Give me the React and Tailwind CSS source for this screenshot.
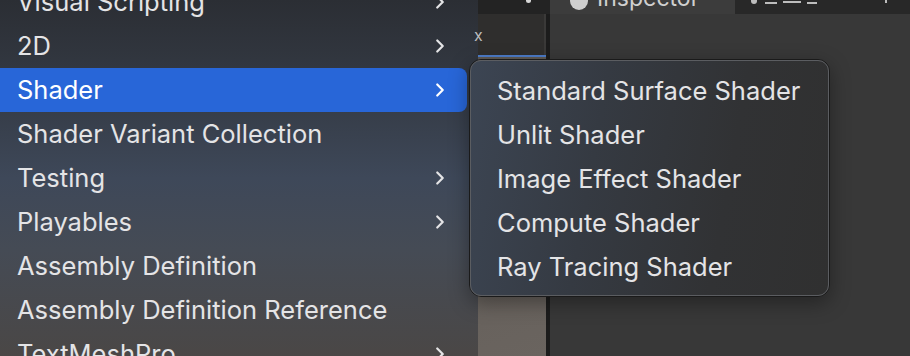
import { ChevronRight } from "lucide-react";

const mainItems = [
  { label: "Visual Scripting", sub: true },
  { label: "2D", sub: true },
  { label: "Shader", sub: true, active: true },
  { label: "Shader Variant Collection" },
  { label: "Testing", sub: true },
  { label: "Playables", sub: true },
  { label: "Assembly Definition" },
  { label: "Assembly Definition Reference" },
  { label: "TextMeshPro", sub: true },
];

const shaderItems = [
  "Standard Surface Shader",
  "Unlit Shader",
  "Image Effect Shader",
  "Compute Shader",
  "Ray Tracing Shader",
];

function MenuRow({ item }) {
  return (
    <div
      className={
        item.active
          ? "h-[44px] flex items-center pl-[17px] pr-[20px] bg-[#2866d8] rounded-r-[8px] text-white"
          : "h-[44px] flex items-center pl-[17px] pr-[20px] text-[#e4e4e6]"
      }
    >
      <span className="flex-1 whitespace-nowrap">{item.label}</span>
      {item.sub && <ChevronRight size={22} strokeWidth={2.4} className="-mr-[4px]" />}
    </div>
  );
}

export default function App() {
  return (
    <div
      className="relative w-[910px] h-[356px] overflow-hidden flex bg-[#383838] text-[25.5px] leading-none"
      style={{ fontFamily: "Inter, 'Noto Sans', sans-serif" }}
    >
      {/* main context menu */}
      <div className="w-[478px] h-full shrink-0 bg-[linear-gradient(180deg,#2b2e34_0%,#343a44_25%,#3e4859_50%,#454b55_70%,#4a4746_100%)]">
        <div className="w-[467px] -mt-[20px]">
          {mainItems.map((item) => (
            <MenuRow key={item.label} item={item} />
          ))}
        </div>
      </div>

      {/* editor strip behind */}
      <div className="w-[72px] h-full shrink-0 flex flex-col">
        <div className="h-[14px] bg-[#232323] relative">
          <span className="absolute left-[48px] -top-[2px] w-[5px] h-[5px] rounded-full bg-[#d8d8d8]" />
        </div>
        <div className="flex flex-1">
          <div className="w-[68px] flex flex-col">
            <div className="h-[41px] bg-[#2f2e2d] border-r-[2px] border-[#3a3938] flex items-center">
              <span className="text-[16px] text-[#bdbdbd] -ml-[4px]">x</span>
            </div>
            <div className="h-[2px] bg-[#4d7cc9]" />
            <div className="flex-1 bg-[linear-gradient(160deg,#5e5954,#6a645f)]" />
          </div>
          <div className="w-[4px] bg-[#1c1c1c]" />
        </div>
      </div>

      {/* inspector */}
      <div className="flex-1 flex flex-col">
        <div className="h-[14px] flex">
          <div className="w-[185px] bg-[#3c3c3c] relative overflow-hidden">
            <span className="absolute left-[20px] -top-[8px] w-[18px] h-[18px] rounded-full bg-[#cfcfcf]" />
            <span className="absolute left-[47px] -top-[13px] text-[23px] text-[#d0d0d0]">Inspector</span>
          </div>
          <div className="flex-1 bg-[#282828] relative overflow-hidden">
            <span className="absolute left-[16px] -top-[4px] w-[6px] h-[8px] bg-[#bdbdbd] rounded-b-full" />
            <span className="absolute left-[30px] -top-[3px] w-[12px] h-[7px] border-b-2 border-[#bdbdbd]" />
            <span className="absolute left-[48px] -top-[3px] w-[18px] h-[6px] border-b-2 border-[#bdbdbd]" />
            <span className="absolute left-[72px] -top-[3px] w-[10px] h-[7px] border-b-2 border-[#bdbdbd]" />
            <span className="absolute left-[150px] -top-[3px] w-[2px] h-[6px] bg-[#bdbdbd]" />
          </div>
        </div>
        <div className="flex-1 bg-[#383838]" />
      </div>

      {/* shader submenu */}
      <div className="absolute left-[469px] top-[59px] w-[361px] h-[238px] rounded-[12px] border border-[#1a1a1a] shadow-[0_6px_20px_rgba(0,0,0,0.35)]">
        <div className="w-full h-full rounded-[11px] border border-[#5b5d61] bg-[linear-gradient(100deg,#3c4553_0%,#353a42_35%,#313234_70%,#303030_100%)] pt-[8px]">
          {shaderItems.map((label) => (
            <div key={label} className="h-[44px] flex items-center pl-[26px] text-[#e4e4e6] whitespace-nowrap">
              {label}
            </div>
          ))}
        </div>
      </div>
    </div>
  );
}
